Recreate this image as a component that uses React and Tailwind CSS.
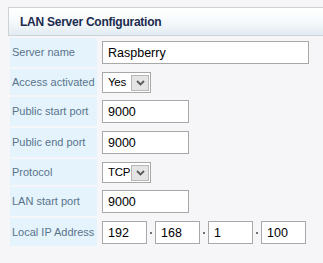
// LAN server configuration panel

const Label = ({ children }) => (
  <div className="w-[87px] shrink-0 bg-[#e4f3fc] pl-[2px] flex items-center text-[11px] text-[#5a738c]">
    {children}
  </div>
);

const TextBox = ({ value, width }) => (
  <input
    readOnly
    value={value}
    className="h-[23px] border border-[#a8a8a8] bg-white pl-[5px] text-[12.5px] text-black outline-none"
    style={{ width }}
  />
);

const SelectBox = ({ value }) => (
  <div className="w-[49px] h-[21px] border border-[#a8a8a8] bg-white flex items-center justify-between pl-[5px] pr-px">
    <span className="text-[11.5px] tracking-[-0.3px] text-black leading-none">{value}</span>
    <div className="w-[18px] h-[16px] border border-[#b8b8b8] bg-[#e4e4e4] flex items-center justify-center">
      <svg width="9" height="6" viewBox="0 0 9 6">
        <path d="M1 1 L4.5 4.5 L8 1" fill="none" stroke="#5a5a5a" strokeWidth="1.8" />
      </svg>
    </div>
  </div>
);

const Row = ({ label, height, children }) => (
  <div className="flex" style={{ height }}>
    <Label>{label}</Label>
    <div className="pl-[5px] pt-[3px] flex items-start">{children}</div>
  </div>
);

const IP = ['192', '168', '1', '100'];

const App = () => {
  return (
    <div className="w-[323px] h-[263px] bg-[#f6f6f8] pt-[7px] pl-[8px] overflow-hidden font-['Liberation_Sans',Arial,sans-serif]">
      {/* Header */}
      <div className="h-[29px] border border-r-0 border-[#cdd2d6] bg-gradient-to-b from-white via-[#f6f9fb] to-[#e2ecf3] pl-[11px] flex items-center">
        <span className="text-[12px] font-bold tracking-[-0.25px] text-[#1b2a4e]">LAN Server Configuration</span>
      </div>

      {/* Rows */}
      <div className="flex flex-col gap-[2px] mt-[2px] pl-[2px]">
        <Row label="Server name" height={29}>
          <TextBox value="Raspberry" width={207} />
        </Row>
        <Row label="Access activated" height={26}>
          <SelectBox value="Yes" />
        </Row>
        <Row label="Public start port" height={29}>
          <TextBox value="9000" width={87} />
        </Row>
        <Row label="Public end port" height={29}>
          <TextBox value="9000" width={87} />
        </Row>
        <Row label="Protocol" height={26}>
          <SelectBox value="TCP" />
        </Row>
        <Row label="LAN start port" height={29}>
          <TextBox value="9000" width={87} />
        </Row>
        <Row label="Local IP Address" height={28}>
          <div className="flex items-center">
            {IP.map((part, i) => (
              <div key={i} className="flex items-center">
                {i > 0 && (
                  <div className="w-[8px] flex justify-center">
                    <div className="w-[2px] h-[2px] bg-[#707070] mt-[1px]" />
                  </div>
                )}
                <TextBox value={part} width={45} />
              </div>
            ))}
          </div>
        </Row>
      </div>
    </div>
  );
};

export default App;
